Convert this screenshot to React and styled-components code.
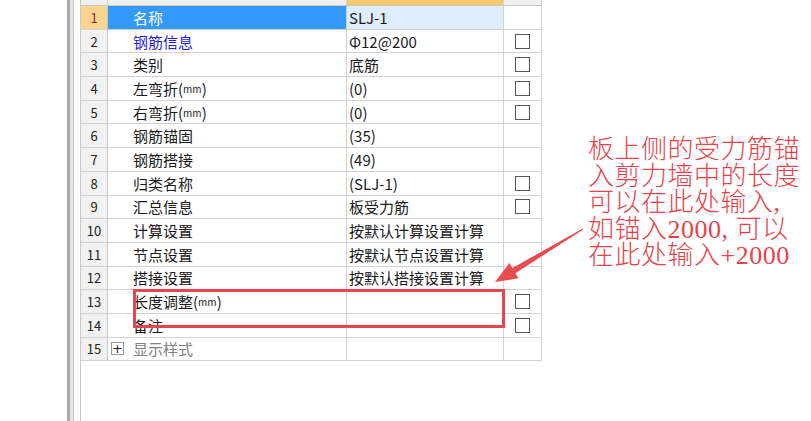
import React from "react";
import styled, { createGlobalStyle } from "styled-components";

const GlobalStyle = createGlobalStyle`
  html, body {
    margin: 0;
    padding: 0;
    background: #ffffff;
  }
`;

const Page = styled.div`
  position: relative;
  display: flex;
  width: 811px;
  height: 421px;
  overflow: hidden;
  background: #ffffff;
  font-family: "SimSun", "Noto Sans CJK SC", sans-serif;
`;

const LeftBlank = styled.div`
  width: 67px;
  flex-shrink: 0;
`;

const Splitter = styled.div`
  width: 13px;
  flex-shrink: 0;
  box-sizing: border-box;
  border-left: 3px solid #a9a9a9;
  background: linear-gradient(to right, #e4e4e4 0 3px, #c4c4c4 3px 4px, #ffffff 4px);
`;

const Panel = styled.div`
  flex: 1;
  border-left: 1px solid #c9c9c9;
`;

const Grid = styled.div`
  display: grid;
  grid-template-columns: 27px 239px 157px 38px;
  width: 462px;
`;

const HeadCell = styled.div`
  height: 6px;
  box-sizing: border-box;
  border-right: 1px solid #d2d2d2;
  border-bottom: 1px solid #c8c8c8;
  background: ${(p) => (p.$active ? "#f4c86c" : "#f0f0f0")};
`;

const Cell = styled.div`
  height: 23.7px;
  box-sizing: border-box;
  display: flex;
  align-items: center;
  border-right: 1px solid #d2d2d2;
  border-bottom: 1px solid #d2d2d2;
  font-size: 15px;
  color: #1a1a1a;
  white-space: nowrap;
`;

const NumCell = styled(Cell)`
  justify-content: center;
  font-size: 13px;
  background: ${(p) => (p.$selected ? "#fbd58e" : "#f1f1f1")};
  color: ${(p) => (p.$selected ? "#7a1f4a" : "#222222")};
  border-right-color: #c6c6c6;
`;

const NameCell = styled(Cell)`
  padding-left: ${(p) => (p.$group ? "3px" : "25px")};
  background: ${(p) => (p.$selected ? "#3399ff" : "#ffffff")};
  color: ${(p) =>
    p.$selected ? "#ffffff" : p.$blue ? "#1f1fe6" : p.$group ? "#808080" : "#1a1a1a"};
`;

const ValueCell = styled(Cell)`
  padding-left: 2px;
  background: ${(p) => (p.$selected ? "#deeeff" : "#ffffff")};
`;

const CheckCell = styled(Cell)`
  justify-content: center;
`;

const Unit = styled.span`
  font-size: 10px;
`;

const CheckBox = styled.span`
  width: 15px;
  height: 15px;
  box-sizing: border-box;
  border: 1.5px solid #555555;
  background: #ffffff;
`;

const Expander = styled.span`
  width: 13px;
  height: 13px;
  box-sizing: border-box;
  border: 1px solid #9a9a9a;
  display: flex;
  align-items: center;
  justify-content: center;
  margin-right: 9px;
  font-size: 13px;
  line-height: 1;
  color: #222222;
  font-family: "DejaVu Sans", sans-serif;
`;

const Highlight = styled.div`
  position: absolute;
  left: 133px;
  top: 289px;
  width: 372px;
  height: 39px;
  box-sizing: border-box;
  border: 3px solid #e8464e;
`;

const Note = styled.div`
  position: absolute;
  left: 588px;
  top: 137px;
  font-family: "Liberation Serif", "Noto Sans CJK SC", serif;
  font-weight: 300;
  font-size: 26px;
  letter-spacing: 0.5px;
  line-height: 26.5px;
  color: #e8434b;
  white-space: nowrap;
`;

const ArrowSvg = styled.svg`
  position: absolute;
  left: 0;
  top: 0;
  pointer-events: none;
`;

const rows = [
  { n: 1, name: "名称", value: "SLJ-1", selected: true },
  { n: 2, name: "钢筋信息", value: "Φ12@200", check: true, blue: true },
  { n: 3, name: "类别", value: "底筋", check: true },
  { n: 4, name: "左弯折", unit: "mm", value: "(0)", check: true },
  { n: 5, name: "右弯折", unit: "mm", value: "(0)", check: true },
  { n: 6, name: "钢筋锚固", value: "(35)" },
  { n: 7, name: "钢筋搭接", value: "(49)" },
  { n: 8, name: "归类名称", value: "(SLJ-1)", check: true },
  { n: 9, name: "汇总信息", value: "板受力筋", check: true },
  { n: 10, name: "计算设置", value: "按默认计算设置计算" },
  { n: 11, name: "节点设置", value: "按默认节点设置计算" },
  { n: 12, name: "搭接设置", value: "按默认搭接设置计算" },
  { n: 13, name: "长度调整", unit: "mm", value: "", check: true },
  { n: 14, name: "备注", value: "", check: true },
  { n: 15, name: "显示样式", value: "", group: true },
];

const noteLines = [
  "板上侧的受力筋锚",
  "入剪力墙中的长度",
  "可以在此处输入,",
  "如锚入2000, 可以",
  "在此处输入+2000",
];

const App = () => {
  return (
    <Page>
      <GlobalStyle />
      <LeftBlank />
      <Splitter />
      <Panel>
        <Grid>
          <HeadCell />
          <HeadCell />
          <HeadCell $active />
          <HeadCell />
          {rows.map((r) => (
            <React.Fragment key={r.n}>
              <NumCell $selected={r.selected}>{r.n}</NumCell>
              <NameCell $selected={r.selected} $blue={r.blue} $group={r.group}>
                {r.group && <Expander>+</Expander>}
                {r.name}
                {r.unit && (
                  <>
                    (<Unit>{r.unit}</Unit>)
                  </>
                )}
              </NameCell>
              <ValueCell $selected={r.selected}>{r.value}</ValueCell>
              <CheckCell>{r.check && <CheckBox />}</CheckCell>
            </React.Fragment>
          ))}
        </Grid>
      </Panel>
      <Highlight />
      <ArrowSvg width="811" height="421" viewBox="0 0 811 421">
        <polygon
          points="583.3,229.4 515.4,273.2 518.5,278.3 495,282 509.3,262.9 512.4,268 582.7,228.6"
          fill="#e84c50"
        />
      </ArrowSvg>
      <Note>
        {noteLines.map((l) => (
          <div key={l}>{l}</div>
        ))}
      </Note>
    </Page>
  );
};

export default App;
